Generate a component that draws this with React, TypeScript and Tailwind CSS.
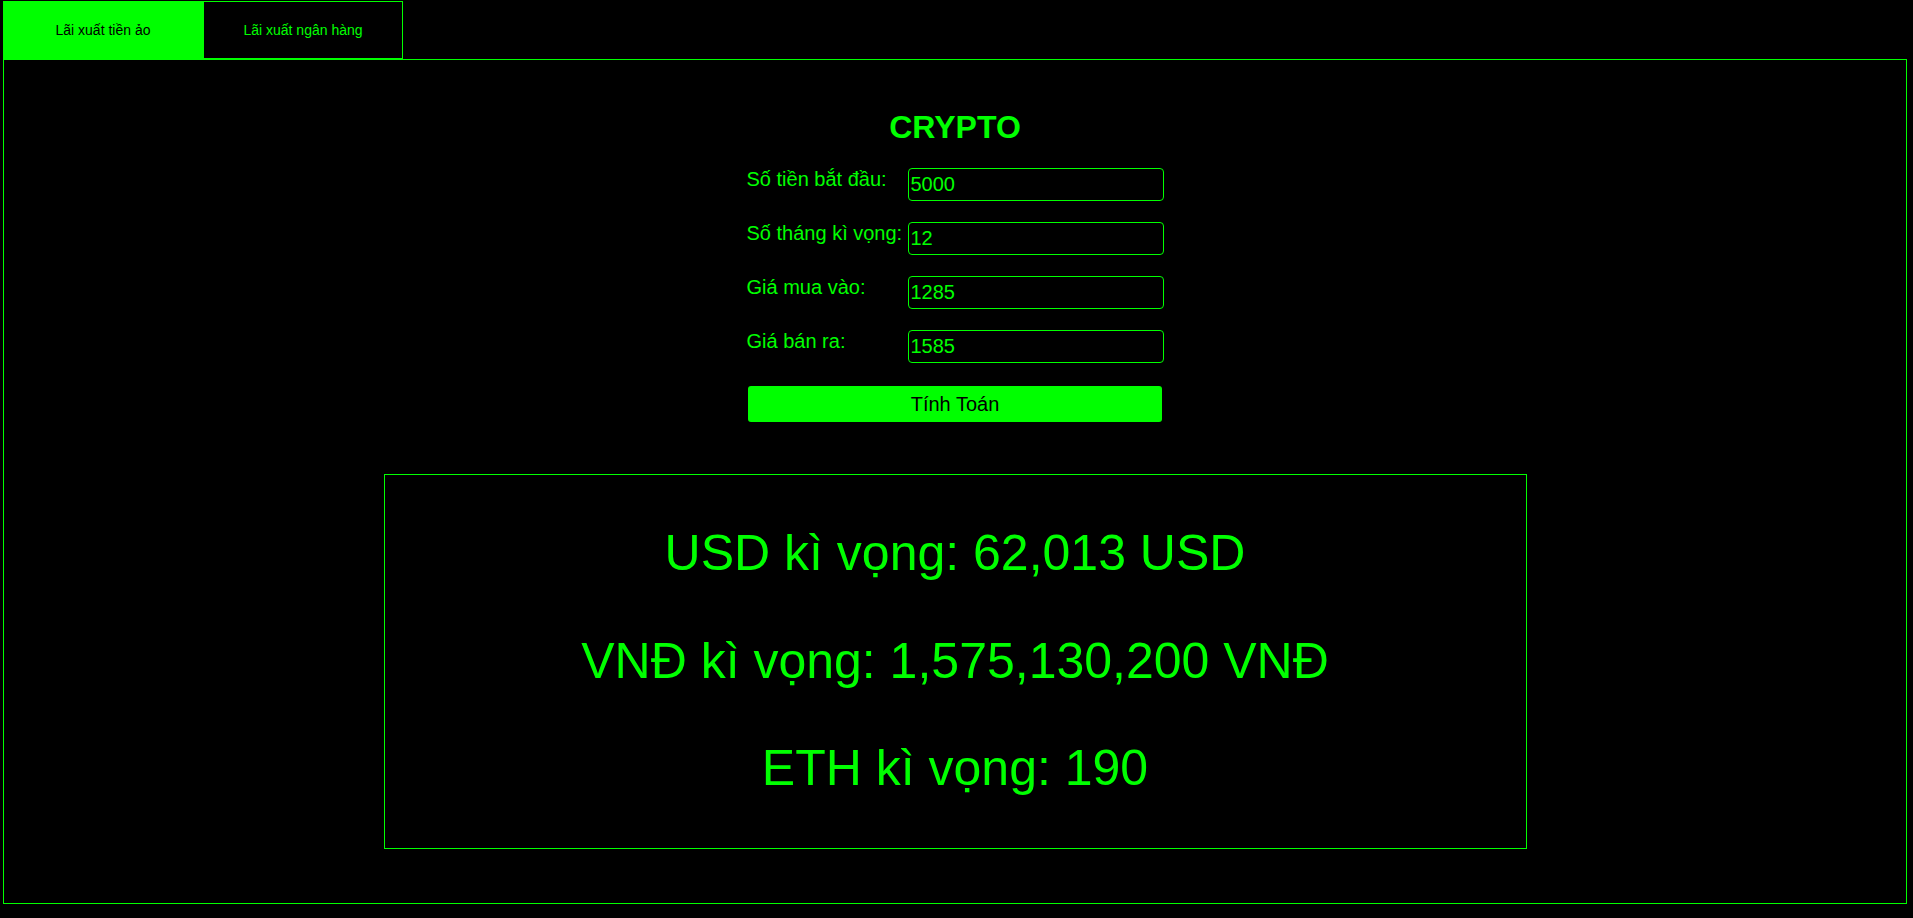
import { useState } from "react";

const fields = [
  { label: "Số tiền bắt đầu:", value: "5000" },
  { label: "Số tháng kì vọng:", value: "12" },
  { label: "Giá mua vào:", value: "1285" },
  { label: "Giá bán ra:", value: "1585" },
];

export default function App() {
  const [tab, setTab] = useState(0);
  const [values, setValues] = useState(fields.map((f) => f.value));

  return (
    <div className="min-h-screen bg-black pl-[3px] pt-px font-['Liberation_Sans',Arial,sans-serif] text-[#00ff00]">
      {/* Tabs */}
      <div className="flex h-[58px]">
        <button
          onClick={() => setTab(0)}
          className={
            tab === 0
              ? "w-[200px] bg-[#00ff00] text-[14px] text-black"
              : "w-[200px] border border-[#00ff00] text-[14px] text-[#00ff00]"
          }
        >
          Lãi xuất tiền ảo
        </button>
        <button
          onClick={() => setTab(1)}
          className={
            tab === 1
              ? "w-[200px] bg-[#00ff00] text-[14px] text-black"
              : "w-[200px] border border-[#00ff00] text-[14px] text-[#00ff00]"
          }
        >
          Lãi xuất ngân hàng
        </button>
      </div>

      {/* Panel */}
      <div className="flex h-[845px] w-[1904px] flex-col items-center border border-[#00ff00]">
        <h1 className="mt-[49px] text-[32px] font-bold leading-[37px]">CRYPTO</h1>

        <div className="mt-[22px] flex w-[417px] flex-col gap-[21px]">
          {fields.map((f, i) => (
            <div key={f.label} className="flex items-start">
              <label className="w-[161px] text-[20px] leading-[23px]">{f.label}</label>
              <input
                value={values[i]}
                onChange={(e) => {
                  const next = [...values];
                  next[i] = e.target.value;
                  setValues(next);
                }}
                className="h-[33px] w-64 rounded-[4px] border border-[#00ff00] bg-black px-[2px] text-[20px] text-[#00ff00] outline-none"
              />
            </div>
          ))}
        </div>

        <button className="mt-[23px] h-[36px] w-[414px] rounded-[3px] bg-[#00ff00] text-[20px] text-black">
          Tính Toán
        </button>

        {/* Result */}
        <div className="mt-[52px] w-[1143px] border border-[#00ff00] text-center text-[50px] leading-[57.5px]">
          <p className="my-[50px]">USD kì vọng: 62,013 USD</p>
          <p className="my-[50px]">VNĐ kì vọng: 1,575,130,200 VNĐ</p>
          <p className="my-[50px]">ETH kì vọng: 190</p>
        </div>
      </div>
    </div>
  );
}
